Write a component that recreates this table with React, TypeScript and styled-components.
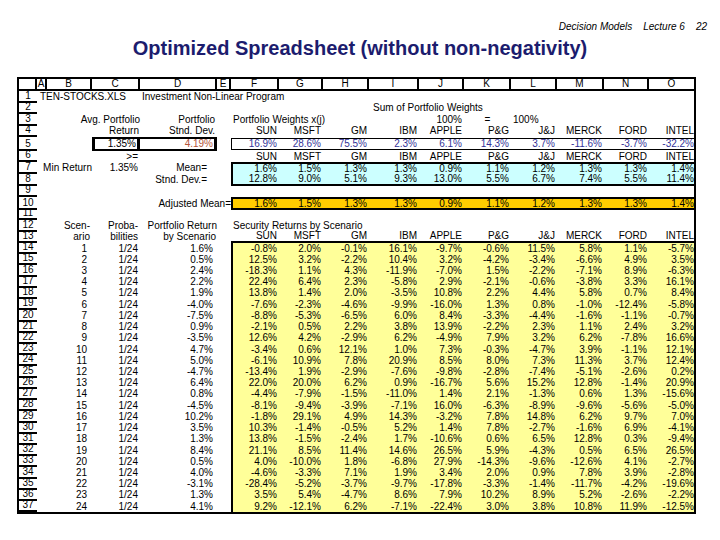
import React from 'react';
import styled, { createGlobalStyle } from 'styled-components';

const GlobalStyle = createGlobalStyle`
  *, *::before, *::after { box-sizing: border-box; }
  html, body { margin: 0; padding: 0; background: #fff; }
  body { font-family: "Liberation Sans", Arial, sans-serif; color: #000; }
`;

const Page = styled.div`
  width: 720px;
  height: 540px;
  overflow: hidden;
  display: flex;
  flex-direction: column;
`;

const SlideHeader = styled.div`
  display: flex;
  justify-content: flex-end;
  gap: 11px;
  padding: 21px 13px 0 0;
  font-size: 10px;
  line-height: 12px;
  font-style: italic;
`;

const Title = styled.h1`
  margin: 3px 0 0;
  text-align: center;
  font-size: 20px;
  line-height: 24px;
  font-weight: bold;
  color: #1c1c6e;
`;

// header, rows 1-13 (row 5 holds the boxed totals), rows 14-37 scenarios
const Sheet = styled.div`
  margin: 17px 0 0 17px;
  width: fit-content;
  display: grid;
  grid-template-columns: 18px 10px 45px 48px 77px 14px 48px 44px 46px 50px 45px 47px 46px 47px 45px 45px;
  grid-template-rows:
    12px repeat(4, 11.5px) 14px 11px 12px 12px 11px 13px 10px repeat(2, 11.5px)
    repeat(24, 11.23px);
  border: 2px solid #000;
  font-size: 10px;
`;

const ColHead = styled.div<{ $end?: boolean }>`
  display: flex;
  align-items: center;
  justify-content: center;
  line-height: 10px;
  border-bottom: 2px solid #000;
  border-right: ${p => (p.$end ? 'none' : '2px solid #000')};
`;

const RowNum = styled.div`
  display: flex;
  align-items: flex-end;
  justify-content: center;
  line-height: 10px;
  border-bottom: 2px solid #000;
`;

type CellProps = {
  $align?: 'left' | 'right' | 'center';
  $span?: number;
  $fill?: string;
  $ink?: string;
  $pad?: number;
  $inset?: number;
  $top?: number;
  $right?: number;
  $bottom?: number;
  $left?: number;
};

const Cell = styled.div<CellProps>`
  grid-column: span ${p => p.$span ?? 1};
  min-width: 0;
  margin: ${p => p.$inset ?? 0}px 0;
  display: flex;
  align-items: center;
  justify-content: ${p =>
    p.$align === 'left' ? 'flex-start' : p.$align === 'center' ? 'center' : 'flex-end'};
  padding: ${p =>
    p.$align === 'left'
      ? `0 0 0 ${p.$pad ?? 2}px`
      : p.$align === 'center'
      ? '0'
      : `0 ${p.$pad ?? 2}px 0 0`};
  white-space: nowrap;
  line-height: 10px;
  background: ${p => p.$fill ?? 'transparent'};
  color: ${p => p.$ink ?? '#000'};
  border-style: solid;
  border-color: #000;
  border-width: ${p => `${p.$top ?? 0}px ${p.$right ?? 0}px ${p.$bottom ?? 0}px ${p.$left ?? 0}px`};
`;

const LETTERS = ['', 'A', 'B', 'C', 'D', 'E', 'F', 'G', 'H', 'I', 'J', 'K', 'L', 'M', 'N', 'O'];
const TICKERS = ['SUN', 'MSFT', 'GM', 'IBM', 'APPLE', 'P&G', 'J&J', 'MERCK', 'FORD', 'INTEL'];
const WEIGHTS = ['16.9%', '28.6%', '75.5%', '2.3%', '6.1%', '14.3%', '3.7%', '-11.6%', '-3.7%', '-32.2%'];
const MEANS = ['1.6%', '1.5%', '1.3%', '1.3%', '0.9%', '1.1%', '1.2%', '1.3%', '1.3%', '1.4%'];
const STDEVS = ['12.8%', '9.0%', '5.1%', '9.3%', '13.0%', '5.5%', '6.7%', '7.4%', '5.5%', '11.4%'];

// portfolio return, then security returns SUN..INTEL
const SCENARIOS: [string, string[]][] = [
  ['1.6%', ['-0.8%', '2.0%', '-0.1%', '16.1%', '-9.7%', '-0.6%', '11.5%', '5.8%', '1.1%', '-5.7%']],
  ['0.5%', ['12.5%', '3.2%', '-2.2%', '10.4%', '3.2%', '-4.2%', '-3.4%', '-6.6%', '4.9%', '3.5%']],
  ['2.4%', ['-18.3%', '1.1%', '4.3%', '-11.9%', '-7.0%', '1.5%', '-2.2%', '-7.1%', '8.9%', '-6.3%']],
  ['2.2%', ['22.4%', '6.4%', '2.3%', '-5.8%', '2.9%', '-2.1%', '-0.6%', '-3.8%', '3.3%', '16.1%']],
  ['1.9%', ['13.8%', '1.4%', '2.0%', '-3.5%', '10.8%', '2.2%', '4.4%', '5.8%', '0.7%', '8.4%']],
  ['-4.0%', ['-7.6%', '-2.3%', '-4.6%', '-9.9%', '-16.0%', '1.3%', '0.8%', '-1.0%', '-12.4%', '-5.8%']],
  ['-7.5%', ['-8.8%', '-5.3%', '-6.5%', '6.0%', '8.4%', '-3.3%', '-4.4%', '-1.6%', '-1.1%', '-0.7%']],
  ['0.9%', ['-2.1%', '0.5%', '2.2%', '3.8%', '13.9%', '-2.2%', '2.3%', '1.1%', '2.4%', '3.2%']],
  ['-3.5%', ['12.6%', '4.2%', '-2.9%', '6.2%', '-4.9%', '7.9%', '3.2%', '6.2%', '-7.8%', '16.6%']],
  ['4.7%', ['-3.4%', '0.6%', '12.1%', '1.0%', '7.3%', '-0.3%', '-4.7%', '3.9%', '-1.1%', '12.1%']],
  ['5.0%', ['-6.1%', '10.9%', '7.8%', '20.9%', '8.5%', '8.0%', '7.3%', '11.3%', '3.7%', '12.4%']],
  ['-4.7%', ['-13.4%', '1.9%', '-2.9%', '-7.6%', '-9.8%', '-2.8%', '-7.4%', '-5.1%', '-2.6%', '0.2%']],
  ['6.4%', ['22.0%', '20.0%', '6.2%', '0.9%', '-16.7%', '5.6%', '15.2%', '12.8%', '-1.4%', '20.9%']],
  ['0.8%', ['-4.4%', '-7.9%', '-1.5%', '-11.0%', '1.4%', '2.1%', '-1.3%', '0.6%', '1.3%', '-15.6%']],
  ['-4.5%', ['-8.1%', '-9.4%', '-3.9%', '-7.1%', '16.0%', '-6.3%', '-8.9%', '-9.6%', '-5.6%', '-5.0%']],
  ['10.2%', ['-1.8%', '29.1%', '4.9%', '14.3%', '-3.2%', '7.8%', '14.8%', '6.2%', '9.7%', '7.0%']],
  ['3.5%', ['10.3%', '-1.4%', '-0.5%', '5.2%', '1.4%', '7.8%', '-2.7%', '-1.6%', '6.9%', '-4.1%']],
  ['1.3%', ['13.8%', '-1.5%', '-2.4%', '1.7%', '-10.6%', '0.6%', '6.5%', '12.8%', '0.3%', '-9.4%']],
  ['8.4%', ['21.1%', '8.5%', '11.4%', '14.6%', '26.5%', '5.9%', '-4.3%', '0.5%', '6.5%', '26.5%']],
  ['0.5%', ['4.0%', '-10.0%', '1.8%', '-6.8%', '27.9%', '-14.3%', '-9.6%', '-12.6%', '4.1%', '-2.7%']],
  ['4.0%', ['-4.6%', '-3.3%', '7.1%', '1.9%', '3.4%', '2.0%', '0.9%', '7.8%', '3.9%', '-2.8%']],
  ['-3.1%', ['-28.4%', '-5.2%', '-3.7%', '-9.7%', '-17.8%', '-3.3%', '-1.4%', '-11.7%', '-4.2%', '-19.6%']],
  ['1.3%', ['3.5%', '5.4%', '-4.7%', '8.6%', '7.9%', '10.2%', '8.9%', '5.2%', '-2.6%', '-2.2%']],
  ['4.1%', ['9.2%', '-12.1%', '6.2%', '-7.1%', '-22.4%', '3.0%', '3.8%', '10.8%', '11.9%', '-12.5%']],
];

const padFor = (i: number) => (i === 9 ? 0 : 2);

const App = () => {
  return (
    <>
      <GlobalStyle />
      <Page>
        <SlideHeader>
          <span>Decision Models</span>
          <span>Lecture 6</span>
          <span>22</span>
        </SlideHeader>
        <Title>Optimized Spreadsheet (without non-negativity)</Title>

        <Sheet>
          {LETTERS.map((l, i) => (
            <ColHead key={i} $end={i === LETTERS.length - 1}>{l}</ColHead>
          ))}

          {/* 1 */}
          <RowNum>1</RowNum>
          <Cell $span={3} $align="left" $pad={3}>TEN-STOCKS.XLS</Cell>
          <Cell $span={12} $align="left">Investment Non-Linear Program</Cell>

          {/* 2 */}
          <RowNum>2</RowNum>
          <Cell $span={8} />
          <Cell $span={3} $align="left" $pad={4}>Sum of Portfolio Weights</Cell>
          <Cell $span={4} />

          {/* 3 */}
          <RowNum>3</RowNum>
          <Cell />
          <Cell $span={2} $pad={0}>Avg. Portfolio</Cell>
          <Cell>Portfolio</Cell>
          <Cell />
          <Cell $span={4} $align="left">Portfolio Weights x(j)</Cell>
          <Cell>100%</Cell>
          <Cell $align="center">=</Cell>
          <Cell $align="left">100%</Cell>
          <Cell $span={3} />

          {/* 4 */}
          <RowNum>4</RowNum>
          <Cell $span={2} />
          <Cell $pad={1}>Return</Cell>
          <Cell>Stnd. Dev.</Cell>
          <Cell />
          {TICKERS.map((t, i) => <Cell key={t} $pad={padFor(i)}>{t}</Cell>)}

          {/* 5 */}
          <RowNum>5</RowNum>
          <Cell $span={2} />
          <Cell $pad={1} $top={2} $right={3} $bottom={2} $left={3}>1.35%</Cell>
          <Cell $pad={1} $top={2} $right={3} $bottom={2} $ink="#b4553a">4.19%</Cell>
          <Cell />
          {WEIGHTS.map((w, i) => (
            <Cell
              key={i}
              $pad={padFor(i)}
              $inset={1}
              $ink="#333399"
              $top={1.5}
              $bottom={1.5}
              $left={i === 0 ? 1.5 : 0}
            >
              {w}
            </Cell>
          ))}

          {/* 6 */}
          <RowNum>6</RowNum>
          <Cell $span={2} />
          <Cell>&gt;=</Cell>
          <Cell $span={2} />
          {TICKERS.map((t, i) => <Cell key={t} $pad={padFor(i)}>{t}</Cell>)}

          {/* 7 */}
          <RowNum>7</RowNum>
          <Cell $span={2} $pad={0}>Min Return</Cell>
          <Cell>1.35%</Cell>
          <Cell $pad={10}>Mean=</Cell>
          <Cell />
          {MEANS.map((m, i) => (
            <Cell key={i} $pad={padFor(i)} $fill="#ccffff" $top={2} $left={i === 0 ? 2 : 0}>{m}</Cell>
          ))}

          {/* 8 */}
          <RowNum>8</RowNum>
          <Cell $span={3} />
          <Cell $pad={10}>Stnd. Dev.=</Cell>
          <Cell />
          {STDEVS.map((s, i) => (
            <Cell key={i} $pad={padFor(i)} $fill="#ccffff" $bottom={2} $left={i === 0 ? 2 : 0}>{s}</Cell>
          ))}

          {/* 9 */}
          <RowNum>9</RowNum>
          <Cell $span={15} />

          {/* 10 */}
          <RowNum>10</RowNum>
          <Cell $span={3} />
          <Cell $span={2} $pad={0}>Adjusted Mean=</Cell>
          {MEANS.map((m, i) => (
            <Cell key={i} $pad={padFor(i)} $fill="#ffcc00" $top={2} $bottom={2} $left={i === 0 ? 2 : 0}>
              {m}
            </Cell>
          ))}

          {/* 11 */}
          <RowNum>11</RowNum>
          <Cell $span={15} />

          {/* 12 */}
          <RowNum>12</RowNum>
          <Cell />
          <Cell>Scen-</Cell>
          <Cell>Proba-</Cell>
          <Cell $pad={0}>Portfolio Return</Cell>
          <Cell />
          <Cell $span={10} $align="left">Security Returns by Scenario</Cell>

          {/* 13 */}
          <RowNum>13</RowNum>
          <Cell />
          <Cell>ario</Cell>
          <Cell>bilities</Cell>
          <Cell $pad={1}>by Scenario</Cell>
          <Cell />
          {TICKERS.map((t, i) => (
            <Cell key={t} $pad={padFor(i)} $bottom={2}>{t}</Cell>
          ))}

          {/* 14 - 37 */}
          {SCENARIOS.map(([ret, vals], r) => (
            <React.Fragment key={r}>
              <RowNum>{r + 14}</RowNum>
              <Cell />
              <Cell $pad={5}>{r + 1}</Cell>
              <Cell>1/24</Cell>
              <Cell $pad={4}>{ret}</Cell>
              <Cell />
              {vals.map((v, i) => (
                <Cell key={i} $pad={padFor(i)} $fill="#ffff99" $left={i === 0 ? 2 : 0}>{v}</Cell>
              ))}
            </React.Fragment>
          ))}
        </Sheet>
      </Page>
    </>
  );
};

export default App;
